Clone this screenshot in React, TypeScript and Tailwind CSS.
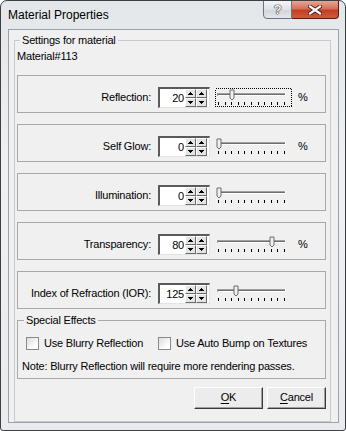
import React from "react";

interface Row {
  label: string;
  value: string;
  pos: number;
  pct?: boolean;
  focus?: boolean;
}

const rows: Row[] = [
  { label: "Reflection:", value: "20", pos: 0.2, pct: true, focus: true },
  { label: "Self Glow:", value: "0", pos: 0, pct: true },
  { label: "Illumination:", value: "0", pos: 0 },
  { label: "Transparency:", value: "80", pos: 0.8, pct: true },
  { label: "Index of Refraction (IOR):", value: "125", pos: 0.25 },
];

function SpinButton({ up }: { up?: boolean }) {
  return (
    <div className="w-[11px] h-[9px] flex items-center justify-center bg-[#e4e4e4] border border-t-white border-l-white border-r-[#6a6a6a] border-b-[#6a6a6a]">
      <svg width="5" height="3" viewBox="0 0 5 3" shapeRendering="crispEdges">
        <path d={up ? "M2.5 0L5 3H0Z" : "M0 0H5L2.5 3Z"} fill="#000" />
      </svg>
    </div>
  );
}

function SpinBox({ value }: { value: string }) {
  return (
    <div className="w-[52px] h-[21px] flex bg-white border-t-2 border-l-2 border-r border-b border-t-[#5a5a5a] border-l-[#5a5a5a] border-r-[#e3e3e3] border-b-[#e3e3e3]">
      <span className="flex-1 text-right leading-[18px] pr-[1px]">{value}</span>
      <div className="flex pr-[2px]">
        <div className="flex flex-col">
          <SpinButton up />
          <SpinButton />
        </div>
        <div className="flex flex-col">
          <SpinButton up />
          <SpinButton />
        </div>
      </div>
    </div>
  );
}

function Trackbar({ pos, focus }: { pos: number; focus?: boolean }) {
  const cx = Math.round(4 + pos * 66);
  const ticks = Array.from({ length: 11 }, (_, i) => Math.round(3 + i * 6.6));
  return (
    <svg width="77" height="19" viewBox="0 0 77 19" shapeRendering="crispEdges">
      {focus && (
        <rect x="0.5" y="0.5" width="76" height="18" fill="none" stroke="#000" strokeDasharray="1 1" />
      )}
      <rect x="2" y="5" width="69" height="1" fill="#a0a0a0" />
      <rect x="2" y="6" width="69" height="1" fill="#6e6e6e" />
      <rect x="2" y="7" width="69" height="1" fill="#ffffff" />
      <rect x="2" y="5" width="1" height="3" fill="#a0a0a0" />
      <rect x="70" y="5" width="1" height="3" fill="#ffffff" />
      {ticks.map((t) => (
        <rect key={t} x={t} y="14" width="1" height="3" fill="#000" />
      ))}
      <polygon
        points={`${cx - 2},2 ${cx + 2},2 ${cx + 2},10 ${cx},12 ${cx - 2},10`}
        fill="#f0f0f0"
        stroke="#6a6a6a"
        strokeWidth="1"
        shapeRendering="auto"
      />
    </svg>
  );
}

function Checkbox({ label }: { label: string }) {
  return (
    <div className="flex items-center gap-[5px]">
      <div className="w-[13px] h-[13px] border border-[#8a8a8a] bg-[linear-gradient(135deg,#dcdcdc,#ffffff_75%)]" />
      <span>{label}</span>
    </div>
  );
}

export default function App() {
  return (
    <div className="w-[346px] h-[431px] flex flex-col bg-[linear-gradient(180deg,#e4e7ea,#eef0f2_40%,#e9ebee)] border border-[#3c3f44] rounded-t-[7px] rounded-b-[3px] font-['Liberation_Sans',Arial,sans-serif] text-[11px] tracking-[-0.2px] text-black overflow-hidden">
      {/* title bar */}
      <div className="h-[28px] flex items-start justify-between pl-[7px] pr-[6px]">
        <span className="text-[12px] tracking-normal leading-[28px]">Material Properties</span>
        <div className="flex -mt-px">
          <div className="w-[29px] h-[19px] flex items-center justify-center border border-[#6b7480] rounded-bl-[4px] bg-[linear-gradient(180deg,#f4f5f6,#dfe2e6_50%,#d0d4d9_51%,#e4e7ea)]">
            <span className="text-[13px] font-bold text-[#f4f4f4] leading-none [text-shadow:0_0_1px_#333,0_0_1px_#333,0_0_1px_#333]">?</span>
          </div>
          <div className="w-[47px] h-[19px] flex items-center justify-center border border-l-0 border-[#5a1a10] rounded-br-[4px] bg-[linear-gradient(180deg,#e8a595,#d5705a_45%,#c23f24_55%,#d3593c)]">
            <svg width="14" height="10" viewBox="0 0 14 10">
              <path d="M2 1.5L12 8.5M12 1.5L2 8.5" stroke="#4a1a12" strokeWidth="4" strokeLinecap="square" />
              <path d="M2 1.5L12 8.5M12 1.5L2 8.5" stroke="#ffffff" strokeWidth="2.2" strokeLinecap="square" />
            </svg>
          </div>
        </div>
      </div>

      {/* client area */}
      <div className="flex-1 ml-[7px] mr-[6px] mb-[8px] bg-[#f0f0f0] border border-[#9aa3ad]">
        <fieldset className="mt-[4px] ml-[5px] mr-[7px] border border-[#c5cad0] pl-[2px] pr-[4px] pt-[3px] pb-[12px] min-w-0">
          <legend className="ml-[3px] px-[2px] leading-[13px]">Settings for material</legend>
          <div className="leading-[13px]">Material#113</div>

          <div className="mt-[12px] flex flex-col gap-[11px]">
            {rows.map((r) => (
              <div key={r.label} className="h-[38px] border border-[#a8a8a8] pt-[11px]">
                <div className="h-[21px] flex items-center">
                  <span className="w-[133px] text-right">{r.label}</span>
                  <div className="ml-[7px]">
                    <SpinBox value={r.value} />
                  </div>
                  <div className="ml-[5px] flex">
                    <Trackbar pos={r.pos} focus={r.focus} />
                  </div>
                  {r.pct && <span className="ml-[6px]">%</span>}
                </div>
              </div>
            ))}
          </div>

          <fieldset className="mt-[5px] border border-[#a8a8a8] p-0 pb-[5px] min-w-0">
            <legend className="ml-[6px] px-[2px] leading-[13px]">Special Effects</legend>
            <div className="mt-[8px] pl-[8px] flex items-center">
              <div className="w-[132px]">
                <Checkbox label="Use Blurry Reflection" />
              </div>
              <Checkbox label="Use Auto Bump on Textures" />
            </div>
            <div className="mt-[8px] pl-[4px] leading-[13px]">
              Note: Blurry Reflection will require more rendering passes.
            </div>
          </fieldset>

          <div className="mt-[8px] flex justify-end gap-[4px]">
            <button className="w-[69px] h-[22px] bg-[#ececec] border border-t-white border-l-white border-r-[#3a3a3a] border-b-[#3a3a3a] shadow-[inset_-1px_-1px_0_#a0a0a0]">
              <span className="underline underline-offset-[2px]">O</span>K
            </button>
            <button className="w-[59px] h-[22px] bg-[#ececec] border border-t-white border-l-white border-r-[#3a3a3a] border-b-[#3a3a3a] shadow-[inset_-1px_-1px_0_#a0a0a0]">
              <span className="underline underline-offset-[2px]">C</span>ancel
            </button>
          </div>
        </fieldset>
      </div>
    </div>
  );
}
